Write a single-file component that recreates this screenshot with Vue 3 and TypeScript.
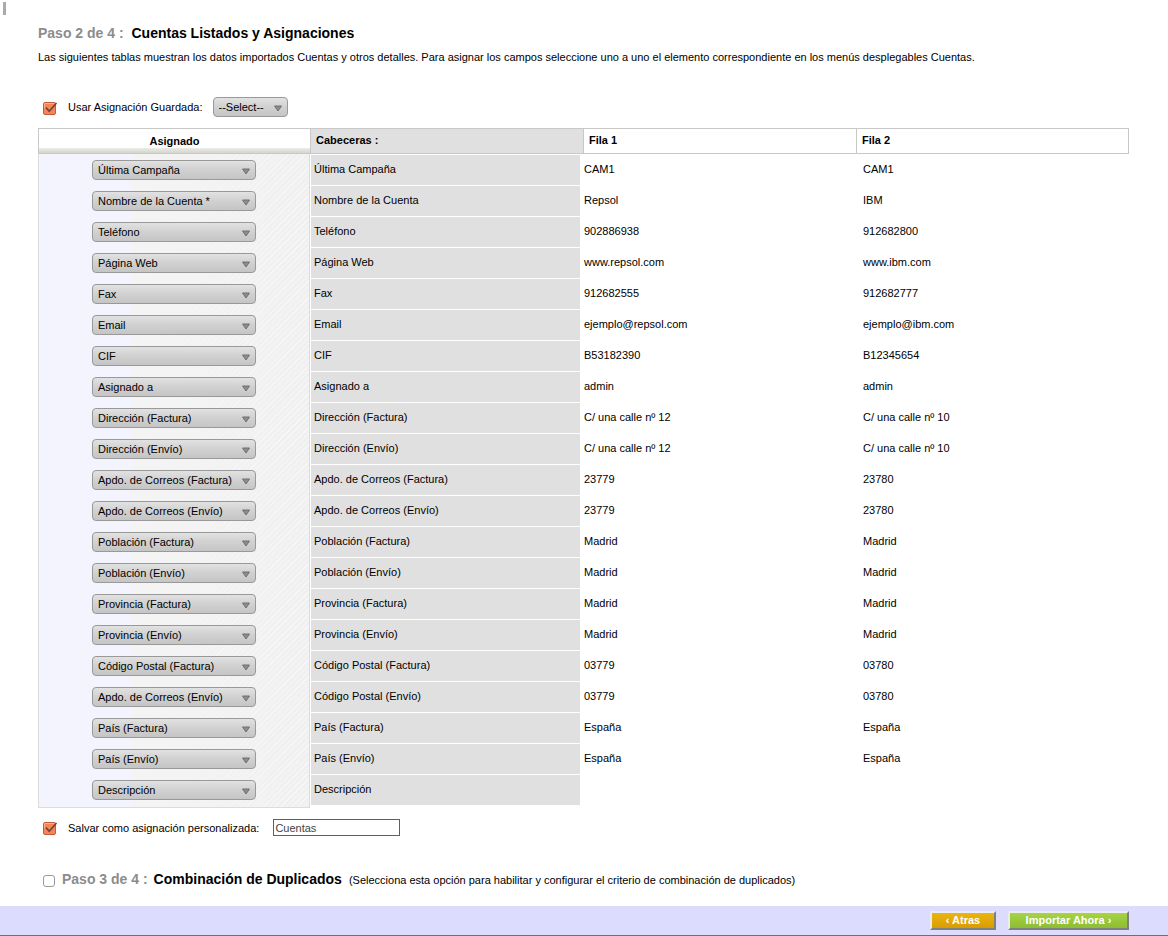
<script setup lang="ts">
import { computed, reactive, ref } from 'vue'

interface ImportRow {
  field: string
  header: string
  first: string
  second: string
}

const rows = reactive<ImportRow[]>([
  { field: 'Última Campaña', header: 'Última Campaña', first: 'CAM1', second: 'CAM1' },
  { field: 'Nombre de la Cuenta *', header: 'Nombre de la Cuenta', first: 'Repsol', second: 'IBM' },
  { field: 'Teléfono', header: 'Teléfono', first: '902886938', second: '912682800' },
  { field: 'Página Web', header: 'Página Web', first: 'www.repsol.com', second: 'www.ibm.com' },
  { field: 'Fax', header: 'Fax', first: '912682555', second: '912682777' },
  { field: 'Email', header: 'Email', first: 'ejemplo@repsol.com', second: 'ejemplo@ibm.com' },
  { field: 'CIF', header: 'CIF', first: 'B53182390', second: 'B12345654' },
  { field: 'Asignado a', header: 'Asignado a', first: 'admin', second: 'admin' },
  { field: 'Dirección (Factura)', header: 'Dirección (Factura)', first: 'C/ una calle nº 12', second: 'C/ una calle nº 10' },
  { field: 'Dirección (Envío)', header: 'Dirección (Envío)', first: 'C/ una calle nº 12', second: 'C/ una calle nº 10' },
  { field: 'Apdo. de Correos (Factura)', header: 'Apdo. de Correos (Factura)', first: '23779', second: '23780' },
  { field: 'Apdo. de Correos (Envío)', header: 'Apdo. de Correos (Envío)', first: '23779', second: '23780' },
  { field: 'Población (Factura)', header: 'Población (Factura)', first: 'Madrid', second: 'Madrid' },
  { field: 'Población (Envío)', header: 'Población (Envío)', first: 'Madrid', second: 'Madrid' },
  { field: 'Provincia (Factura)', header: 'Provincia (Factura)', first: 'Madrid', second: 'Madrid' },
  { field: 'Provincia (Envío)', header: 'Provincia (Envío)', first: 'Madrid', second: 'Madrid' },
  { field: 'Código Postal (Factura)', header: 'Código Postal (Factura)', first: '03779', second: '03780' },
  { field: 'Apdo. de Correos (Envío)', header: 'Código Postal (Envío)', first: '03779', second: '03780' },
  { field: 'País (Factura)', header: 'País (Factura)', first: 'España', second: 'España' },
  { field: 'País (Envío)', header: 'País (Envío)', first: 'España', second: 'España' },
  { field: 'Descripción', header: 'Descripción', first: '', second: '' },
])

const fieldOptions = computed(() => [...new Set(rows.map((row) => row.field))])
const useSaved = ref(true)
const savedMapping = ref('')
const saveMapping = ref(true)
const mappingName = ref('Cuentas')
const mergeDuplicates = ref(false)
</script>

<template>
  <div class="page">
    <div class="marker"></div>
    <main class="content">
      <h1 class="title"><span class="step">Paso 2 de 4 :</span> <span>Cuentas Listados y Asignaciones</span></h1>
      <p class="intro">
        Las siguientes tablas muestran los datos importados Cuentas y otros detalles. Para asignar los campos seleccione
        uno a uno el elemento correspondiente en los menús desplegables Cuentas.
      </p>

      <div class="option-row">
        <span class="tick">
          <input id="use-saved" v-model="useSaved" type="checkbox" />
          <svg v-if="useSaved" viewBox="0 0 15 15" aria-hidden="true">
            <rect x="0.5" y="2.5" width="12" height="12" rx="1.5" fill="#f4845b" stroke="#c75b38" />
            <path d="M1.5 8V4Q1.5 3.5 2 3.5H11Q11.5 3.5 11.5 4" fill="none" stroke="#fbb08e" />
            <path d="M3 7.5L6.2 11.2L13.5 3" fill="none" stroke="#6b4333" stroke-width="1.6" />
          </svg>
        </span>
        <label for="use-saved">Usar Asignación Guardada:</label>
        <span class="picker compact">
          <select v-model="savedMapping" aria-label="Asignación guardada">
            <option value="">--Select--</option>
          </select>
          <svg class="arrow" viewBox="0 0 8 7" aria-hidden="true">
            <path d="M0.5 1H7.5L4 6Z" fill="#8c8c8c" stroke="#707070" />
          </svg>
        </span>
      </div>

      <table class="mapping">
        <colgroup>
          <col class="assigned-col" />
          <col />
          <col />
          <col />
        </colgroup>
        <thead>
          <tr>
            <th class="assigned-head" scope="col">Asignado</th>
            <th class="headers-head" scope="col">Cabeceras :</th>
            <th scope="col">Fila 1</th>
            <th class="last-head" scope="col">Fila 2</th>
          </tr>
        </thead>
        <tbody>
          <tr v-for="(row, index) in rows" :key="index">
            <td class="assigned">
              <span class="picker">
                <select v-model="row.field" :aria-label="'Asignado: ' + row.header">
                  <option v-for="option in fieldOptions" :key="option">{{ option }}</option>
                </select>
                <svg class="arrow" viewBox="0 0 8 7" aria-hidden="true">
                  <path d="M0.5 1H7.5L4 6Z" fill="#8c8c8c" stroke="#707070" />
                </svg>
              </span>
            </td>
            <td><div class="name">{{ row.header }}</div></td>
            <td class="first">{{ row.first }}</td>
            <td class="second">{{ row.second }}</td>
          </tr>
        </tbody>
      </table>

      <div class="option-row save">
        <span class="tick">
          <input id="save-mapping" v-model="saveMapping" type="checkbox" />
          <svg v-if="saveMapping" viewBox="0 0 15 15" aria-hidden="true">
            <rect x="0.5" y="2.5" width="12" height="12" rx="1.5" fill="#f4845b" stroke="#c75b38" />
            <path d="M1.5 8V4Q1.5 3.5 2 3.5H11Q11.5 3.5 11.5 4" fill="none" stroke="#fbb08e" />
            <path d="M3 7.5L6.2 11.2L13.5 3" fill="none" stroke="#6b4333" stroke-width="1.6" />
          </svg>
        </span>
        <label for="save-mapping">Salvar como asignación personalizada:</label>
        <input v-model="mappingName" class="mapping-name" type="text" aria-label="Nombre de la asignación" />
      </div>

      <div class="merge">
        <input id="merge" v-model="mergeDuplicates" type="checkbox" />
        <label for="merge">
          <span class="title merge-title"><span class="step">Paso 3 de 4 :</span>Combinación de Duplicados</span>
          (Selecciona esta opción para habilitar y configurar el criterio de combinación de duplicados)
        </label>
      </div>
    </main>

    <footer class="actions">
      <button class="back" type="button">‹ Atras</button>
      <button class="import" type="button">Importar Ahora ›</button>
    </footer>
  </div>
</template>

<style>
body {
  margin: 0;
  background: #fff;
}
</style>

<style scoped>
.page,
.page * {
  box-sizing: border-box;
}

.page {
  padding-top: 2px;
  font-family: "Liberation Sans", Arial, sans-serif;
  font-size: 11px;
  line-height: 14px;
  color: #000;
}

.page input,
.page select,
.page button {
  margin: 0;
  font-family: inherit;
  font-size: 11px;
}

.marker {
  width: 3px;
  height: 13px;
  margin-left: 3px;
  background: #aaa;
}

.content {
  padding: 10px 39px 0 38px;
}

.title {
  margin: 0;
  font-size: 14px;
  line-height: 16px;
  font-weight: bold;
}

.step {
  margin-right: 4px;
  color: #8c8c8c;
}

.merge-title {
  margin-right: 4px;
}

.merge-title .step {
  margin-right: 6px;
}

.intro {
  margin: 9px 0 33px;
}

.option-row {
  display: flex;
  align-items: center;
  padding-left: 5px;
}

.tick {
  display: grid;
  width: 15px;
  height: 15px;
  margin-right: 10px;
}

.tick input,
.tick svg {
  grid-area: 1 / 1;
  width: 15px;
  height: 15px;
}

.tick svg {
  pointer-events: none;
}

.tick input:checked {
  appearance: none;
}

.picker {
  display: inline-grid;
  width: 164px;
  height: 20px;
  vertical-align: top;
}

.picker select {
  grid-area: 1 / 1;
  appearance: none;
  width: 100%;
  height: 20px;
  padding: 0 16px 0 5px;
  border: 1px solid #999;
  border-radius: 4px;
  background: linear-gradient(#e2e2e2, #d2d2d2 45%, #c5c5c5);
  color: #000;
}

.picker .arrow {
  grid-area: 1 / 1;
  justify-self: end;
  align-self: center;
  width: 8px;
  height: 7px;
  margin: 2px 6px 0 0;
  pointer-events: none;
}

.picker.compact {
  width: 75px;
  margin-left: 10px;
}

.mapping {
  width: 100%;
  margin-top: 11px;
  table-layout: fixed;
  border-collapse: separate;
  border-spacing: 0;
}

.assigned-col {
  width: 272px;
  background:
    linear-gradient(to right, #f4f4ff 93px, #f4f4f4 93px, #f4f4f4 110px, #f3f3f300),
    repeating-linear-gradient(135deg, #f0f0f0 0 3px, #f7f7f7 3px 4px);
}

th {
  height: 26px;
  padding: 0 0 2px 5px;
  border: solid #c8c8c8;
  border-width: 1px 0 1px 1px;
  background: #fff;
  text-align: left;
}

.assigned-head {
  padding: 0;
  background: linear-gradient(#fff 19px, #ecece8 19px, #d5d5ce);
  text-align: center;
}

.headers-head {
  background: #e0e0e0;
}

.last-head {
  border-right-width: 1px;
}

td {
  height: 31px;
  padding: 0;
  vertical-align: top;
}

.assigned {
  padding: 6px 0 5px;
  border: solid #dcdcdc;
  border-width: 0 1px;
  text-align: center;
}

.name {
  height: 30px;
  margin: 1px 3px 0 1px;
  padding: 7px 3px 0;
  background: #e0e0e0;
}

.first,
.second {
  padding: 8px 1px 0;
}

.second {
  padding-left: 7px;
}

tr:last-child td {
  height: 34px;
}

tr:last-child .assigned {
  border-bottom-width: 1px;
}

.option-row.save {
  margin-top: 11px;
}

.mapping-name {
  width: 127px;
  height: 17px;
  padding: 0 1px;
  border: 1px solid #606060;
  border-radius: 0;
  background: #fff;
  color: #444;
}

.page .mapping-name {
  margin-left: 14px;
}

.merge {
  display: flex;
  align-items: center;
  margin-top: 35px;
  padding-left: 5px;
}

.merge input {
  appearance: none;
  width: 12px;
  height: 12px;
  border: 1px solid #999;
  border-radius: 3px;
  background: #fff;
}

.page .merge input {
  margin: 3px 7px 0 0;
}

.merge input:checked {
  background: #f4845b;
}

.actions {
  display: flex;
  justify-content: flex-end;
  gap: 12px;
  height: 30px;
  margin-top: 19px;
  padding: 5px 39px 0 0;
  border-bottom: 1px solid #707070;
  background: #dcdcff;
}

.actions button {
  height: 19px;
  padding: 0;
  border: 2px solid;
  border-color: #ececec #808080 #808080 #ececec;
  color: #fff;
  font-weight: bold;
  line-height: 13px;
}

.actions .back {
  width: 66px;
  background: linear-gradient(#e9b512, #d99c00);
}

.actions .import {
  width: 121px;
  background: linear-gradient(#a5d444, #8ebc33);
}
</style>
